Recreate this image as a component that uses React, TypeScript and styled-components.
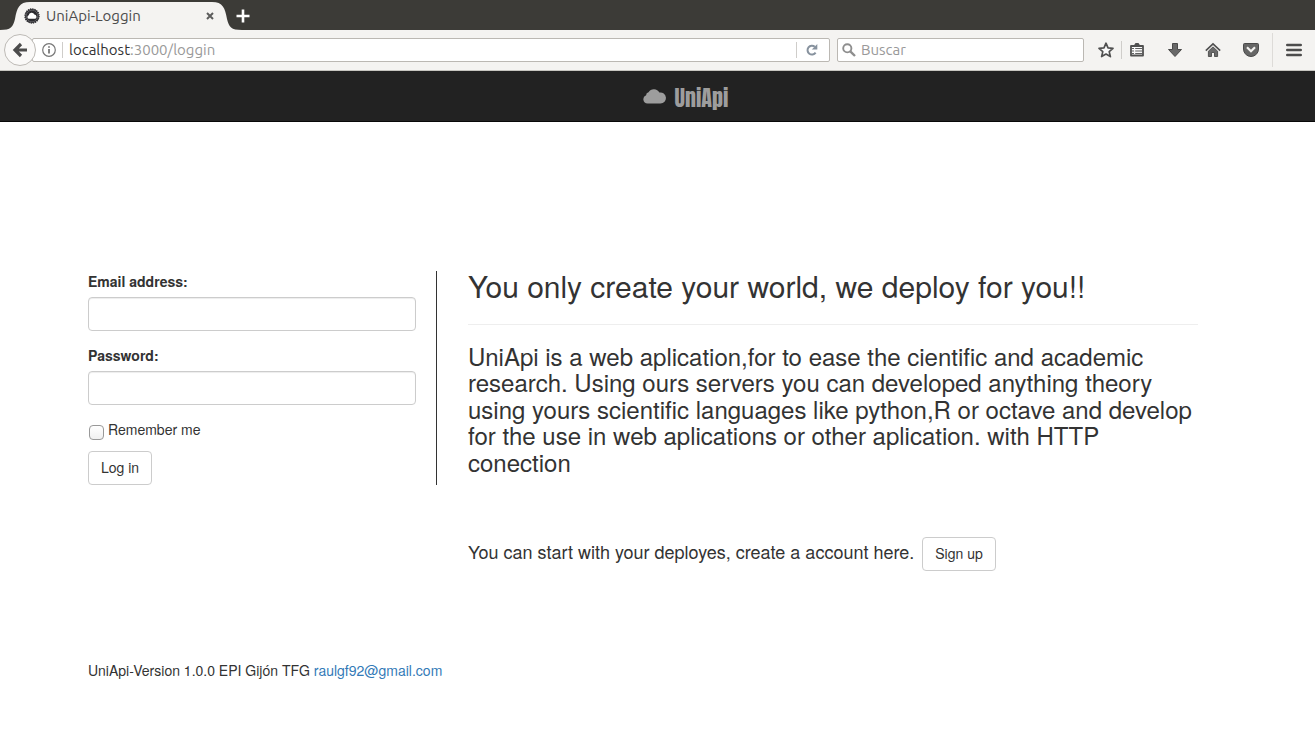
import React from 'react';
import styled, { createGlobalStyle } from 'styled-components';

const GlobalStyle = createGlobalStyle`
  *, *::before, *::after { box-sizing: border-box; }
  body {
    margin: 0;
    background: #fff;
    color: #333;
    font: 14px/20px "Nimbus Sans L", "Nimbus Sans", "TeX Gyre Heros", "Liberation Sans", Arial, sans-serif;
  }
  button, input { font-family: inherit; }
`;

const uiFont = 'Ubuntu, "Noto Sans", "Open Sans", sans-serif';

/* ---------- browser chrome ---------- */

const TabStrip = styled.div`
  display: flex;
  align-items: flex-end;
  height: 30px;
  background: #3c3b37;
  font-family: ${uiFont};
`;

const TabEdge = styled.svg`
  display: block;
  width: 30px;
  height: 28px;
  flex: none;
`;

const Tab = styled.div`
  display: flex;
  align-items: center;
  width: 182px;
  height: 28px;
  background: #f4f3f1;
`;

const TabIcon = styled.span`
  display: flex;
  margin-left: -6px;
`;

const TabTitle = styled.span`
  flex: 1;
  margin-left: 6px;
  font-size: 15px;
  color: #4c4c4c;
  white-space: nowrap;
`;

const TabButton = styled.button`
  display: flex;
  align-items: center;
  justify-content: center;
  width: 16px;
  height: 28px;
  padding: 0;
  border: 0;
  background: none;
`;

const CloseTab = styled(TabButton)`
  margin-right: -6px;
  z-index: 1;
`;

const NewTab = styled(TabButton)`
  margin-left: -7px;
`;

const Toolbar = styled.div`
  display: flex;
  align-items: center;
  height: 41px;
  padding: 0 6px 0 4px;
  background: #f4f3f1;
  border-bottom: 1px solid #c6c5c0;
  font-family: ${uiFont};
`;

const BackButton = styled.button`
  display: flex;
  align-items: center;
  justify-content: center;
  width: 32px;
  height: 32px;
  padding: 0;
  border: 1px solid #bdbab6;
  border-radius: 50%;
  background: #faf9f8;
  z-index: 1;
`;

const Field = styled.div`
  display: flex;
  align-items: center;
  height: 24px;
  border: 1px solid #bbb8b3;
  border-radius: 2px;
  background: #fff;
`;

const AddressField = styled(Field)`
  flex: 1;
  margin-left: -4px;
  padding: 0 2px 0 9px;
`;

const SearchField = styled(Field)`
  width: 247px;
  margin: 0 7px;
  padding-left: 4px;
`;

const Rule = styled.span<{ $height: number; $gap?: number; $color?: string }>`
  flex: none;
  width: 1px;
  height: ${(p) => p.$height}px;
  margin: 0 ${(p) => p.$gap ?? 0}px;
  background: ${(p) => p.$color ?? '#cfcdca'};
`;

const Address = styled.div`
  flex: 1;
  font-size: 15px;
  color: #999;
  white-space: nowrap;
  outline: none;
`;

const Host = styled.span`
  color: #333;
`;

const SearchInput = styled.input`
  flex: 1;
  min-width: 0;
  margin-left: 5px;
  padding: 0;
  border: 0;
  outline: 0;
  background: none;
  font-size: 15px;
  line-height: 20px;
  &::placeholder { color: #999; opacity: 1; }
`;

const ToolButton = styled.button`
  display: flex;
  align-items: center;
  justify-content: center;
  flex: none;
  width: 30px;
  height: 24px;
  padding: 0;
  border: 0;
  background: none;
`;

const ToolGroup = styled.div`
  display: flex;
  gap: 8px;
`;

/* ---------- page ---------- */

const Navbar = styled.nav`
  display: flex;
  align-items: center;
  justify-content: center;
  height: 51px;
  padding-left: 56px;
  background: #222;
  border-bottom: 1px solid #080808;
`;

const Brand = styled.a`
  display: flex;
  align-items: center;
  gap: 9px;
  color: #9d9d9d;
  font: 22px/24px Anton, Roboto, sans-serif;
  text-decoration: none;
`;

const BrandName = styled.span`
  padding-top: 4px;
`;

const Container = styled.div`
  padding: 149px 117px 60px 88px;
`;

const Columns = styled.main`
  display: grid;
  grid-template-columns: 349px minmax(0, 1fr);
  column-gap: 31px;
  align-items: start;
`;

const LoginForm = styled.form`
  padding-right: 20px;
  border-right: 1px solid #333;
`;

const FormGroup = styled.div`
  margin-bottom: 14px;
`;

const Label = styled.label`
  display: block;
  margin-bottom: 6px;
  font-weight: bold;
`;

const TextInput = styled.input`
  display: block;
  width: 100%;
  height: 34px;
  padding: 6px 12px;
  border: 1px solid #ccc;
  border-radius: 4px;
  box-shadow: inset 0 1px 1px rgba(0, 0, 0, 0.075);
  font-size: 14px;
`;

const CheckLabel = styled.label`
  display: flex;
  align-items: flex-start;
  gap: 4px;
  margin: 0 0 11px 1px;
`;

const Checkbox = styled.input`
  appearance: none;
  width: 15px;
  height: 15px;
  margin: 6px 0 0;
  border: 1px solid #999;
  border-radius: 4px;
  background: linear-gradient(#fff, #f0f0f0);
  &:checked { background: #337ab7; }
`;

const Button = styled.button`
  height: 34px;
  padding: 5px 12px 7px;
  border: 1px solid #ccc;
  border-radius: 4px;
  background: #fff;
  color: #333;
  font-size: 14px;
  line-height: 20px;
`;

const Title = styled.h2`
  margin: -2px 0 22px;
  font-size: 30px;
  font-weight: normal;
  line-height: 1.1;
`;

const Divider = styled.hr`
  margin: 0 0 18px;
  border: 0;
  border-top: 1px solid #eee;
`;

const Lead = styled.h3`
  margin: 0 0 62px;
  font-size: 24px;
  font-weight: normal;
  line-height: 1.1;
`;

const SignUp = styled.h4`
  display: flex;
  align-items: baseline;
  gap: 8px;
  margin: 0;
  font-size: 18px;
  font-weight: normal;
`;

const Footer = styled.footer`
  margin-top: 89px;
`;

const MailLink = styled.a`
  color: #337ab7;
  text-decoration: none;
`;

/* ---------- icons ---------- */

const Favicon = () => (
  <svg width="16" height="16" viewBox="0 0 16 16" aria-hidden="true">
    <circle cx="8" cy="8" r="7" fill="#2b2b2f" stroke="#2b2b2f" strokeWidth="1.4" strokeDasharray="1.3 0.9" />
    <circle cx="8" cy="8" r="5.8" fill="none" stroke="#77777b" strokeWidth="0.6" />
    <path d="M5 10.8a1.8 1.8 0 0 1-.3-3.5 3 3 0 0 1 5.7-.7 2.2 2.2 0 0 1 .8 4.2z" fill="#fff" />
  </svg>
);

const CloseIcon = () => (
  <svg width="8" height="8" viewBox="0 0 8 8" aria-hidden="true">
    <path d="M1 1l6 6M7 1L1 7" stroke="#5c5c5c" strokeWidth="2" />
  </svg>
);

const PlusIcon = () => (
  <svg width="14" height="14" viewBox="0 0 14 14" aria-hidden="true">
    <path d="M7 .5v13M.5 7h13" stroke="#fff" strokeWidth="2.6" />
  </svg>
);

const BackIcon = () => (
  <svg width="16" height="16" viewBox="0 0 16 16" aria-hidden="true">
    <path d="M9 2L3 8l6 6M3 8h12" fill="none" stroke="#4c4c4c" strokeWidth="3.2" />
  </svg>
);

const InfoIcon = () => (
  <svg width="14" height="14" viewBox="0 0 14 14" aria-hidden="true">
    <circle cx="7" cy="7" r="6.3" fill="none" stroke="#777" strokeWidth="1.2" />
    <path d="M7 6v4.5M7 3.3v1.5" stroke="#666" strokeWidth="1.6" />
  </svg>
);

const ReloadIcon = () => (
  <svg width="12" height="12" viewBox="0 0 12 12" aria-hidden="true">
    <path d="M9.6 8.6A4.4 4.4 0 1 1 8.8 2.8" fill="none" stroke="#87929e" strokeWidth="2" />
    <path d="M11.3 0v5.6H5.8z" fill="#87929e" />
  </svg>
);

const SearchIcon = () => (
  <svg width="14" height="14" viewBox="0 0 14 14" aria-hidden="true">
    <circle cx="5.3" cy="5.3" r="4.1" fill="none" stroke="#8e8e8e" strokeWidth="1.9" />
    <path d="M8.3 8.3l4.7 4.7" stroke="#8e8e8e" strokeWidth="2.4" />
  </svg>
);

const StarIcon = () => (
  <svg width="18" height="18" viewBox="0 0 18 18" aria-hidden="true">
    <path
      d="M9 2.2l2 4.6 5 .5-3.8 3.3 1.2 5L9 13l-4.4 2.6 1.2-5L2 7.3l5-.5z"
      fill="#fafafa"
      stroke="#505050"
      strokeWidth="1.7"
      strokeLinejoin="round"
    />
  </svg>
);

const ClipboardIcon = () => (
  <svg width="16" height="16" viewBox="0 0 16 16" aria-hidden="true">
    <path d="M2 4h12v9.5H2z" fill="#fafafa" stroke="#505050" strokeWidth="1.8" strokeLinejoin="round" />
    <path d="M4.5 4L6.5 1h3l2 3z" fill="#505050" />
    <path d="M3 6.5h2M6.2 6.5H13M3 9h2M6.2 9H13M3 11.5h2M6.2 11.5H13" stroke="#606060" strokeWidth="1" />
  </svg>
);

const DownloadIcon = () => (
  <svg width="16" height="16" viewBox="0 0 16 16" aria-hidden="true">
    <path d="M5.5 1.5h5v6h4L8 14.5 1.5 7.5h4z" fill="#686868" stroke="#4a4a4a" strokeLinejoin="round" />
  </svg>
);

const HomeIcon = () => (
  <svg width="16" height="16" viewBox="0 0 16 16" aria-hidden="true">
    <path d="M.8 8.6L8 1.8l7.2 6.8" fill="none" stroke="#4f4f4f" strokeWidth="1.6" />
    <path d="M3.4 9.2L8 4.9l4.6 4.3v5.3H9.5v-4h-3v4H3.4z" fill="#6a6a6a" stroke="#4a4a4a" strokeWidth="0.9" />
  </svg>
);

const PocketIcon = () => (
  <svg width="16" height="16" viewBox="0 0 16 16" aria-hidden="true">
    <path d="M1.5 1.5h13a1 1 0 0 1 1 1V7a7.5 7.5 0 0 1-15 0V2.5a1 1 0 0 1 1-1z" fill="#666" stroke="#4a4a4a" />
    <path d="M4 5.3l4 4 4-4" fill="none" stroke="#f4f3f1" strokeWidth="2.2" />
  </svg>
);

const MenuIcon = () => (
  <svg width="16" height="14" viewBox="0 0 16 14" aria-hidden="true">
    <path d="M1.3 2h13.4M1.3 7h13.4M1.3 12h13.4" stroke="#4c4c4c" strokeWidth="2.6" strokeLinecap="round" />
  </svg>
);

const CloudIcon = () => (
  <svg width="23" height="16" viewBox="0 0 23 16" aria-hidden="true">
    <path
      d="M4.5 15.5a4.3 4.3 0 0 1-1.4-8.3A3 3 0 0 1 5.5 4.3 6.2 6.2 0 0 1 16.4 4.6 5.5 5.5 0 1 1 17.5 15.5z"
      fill="currentColor"
    />
  </svg>
);

export default function App() {
  return (
    <>
      <GlobalStyle />
      <header>
        <TabStrip>
          <TabEdge viewBox="0 0 30 28" aria-hidden="true">
            <path d="M0 28C11 28 13 25 15 17C17 6 19 0 30 0V28z" fill="#f4f3f1" />
          </TabEdge>
          <Tab>
            <TabIcon><Favicon /></TabIcon>
            <TabTitle>UniApi-Loggin</TabTitle>
            <CloseTab aria-label="Close tab"><CloseIcon /></CloseTab>
          </Tab>
          <TabEdge viewBox="0 0 30 28" aria-hidden="true">
            <path d="M0 0C11 0 13 6 15 17C17 25 19 28 30 28H0z" fill="#f4f3f1" />
          </TabEdge>
          <NewTab aria-label="New tab"><PlusIcon /></NewTab>
        </TabStrip>
        <Toolbar>
          <BackButton aria-label="Back"><BackIcon /></BackButton>
          <AddressField>
            <InfoIcon />
            <Rule $height={16} $gap={6} />
            <Address role="textbox" aria-label="Address" contentEditable suppressContentEditableWarning spellCheck={false}>
              <Host>localhost</Host>:3000/loggin
            </Address>
            <Rule $height={16} />
            <ToolButton aria-label="Reload"><ReloadIcon /></ToolButton>
          </AddressField>
          <SearchField>
            <SearchIcon />
            <SearchInput type="text" placeholder="Buscar" aria-label="Buscar" />
          </SearchField>
          <ToolButton aria-label="Bookmark this page"><StarIcon /></ToolButton>
          <Rule $height={18} />
          <ToolGroup>
            <ToolButton aria-label="Bookmarks"><ClipboardIcon /></ToolButton>
            <ToolButton aria-label="Downloads"><DownloadIcon /></ToolButton>
            <ToolButton aria-label="Home"><HomeIcon /></ToolButton>
            <ToolButton aria-label="Pocket"><PocketIcon /></ToolButton>
          </ToolGroup>
          <Rule $height={34} $gap={6} $color="#dddbd8" />
          <ToolButton aria-label="Menu"><MenuIcon /></ToolButton>
        </Toolbar>
      </header>

      <Navbar>
        <Brand href="#">
          <CloudIcon />
          <BrandName>UniApi</BrandName>
        </Brand>
      </Navbar>

      <Container>
        <Columns>
          <LoginForm onSubmit={(e) => e.preventDefault()}>
            <FormGroup>
              <Label htmlFor="email">Email address:</Label>
              <TextInput id="email" type="email" />
            </FormGroup>
            <FormGroup>
              <Label htmlFor="password">Password:</Label>
              <TextInput id="password" type="password" />
            </FormGroup>
            <CheckLabel>
              <Checkbox type="checkbox" />
              Remember me
            </CheckLabel>
            <Button type="submit">Log in</Button>
          </LoginForm>
          <section>
            <Title>You only create your world, we deploy for you!!</Title>
            <Divider />
            <Lead>
              UniApi is a web aplication,for to ease the cientific and academic research. Using ours
              servers you can developed anything theory using yours scientific languages like
              python,R or octave and develop for the use in web aplications or other aplication.
              with HTTP conection
            </Lead>
            <SignUp>
              You can start with your deployes, create a account here.
              <Button type="button">Sign up</Button>
            </SignUp>
          </section>
        </Columns>
        <Footer>
          UniApi-Version 1.0.0 EPI Gijón TFG <MailLink href="mailto:raulgf92@gmail.com">raulgf92@gmail.com</MailLink>
        </Footer>
      </Container>
    </>
  );
}
